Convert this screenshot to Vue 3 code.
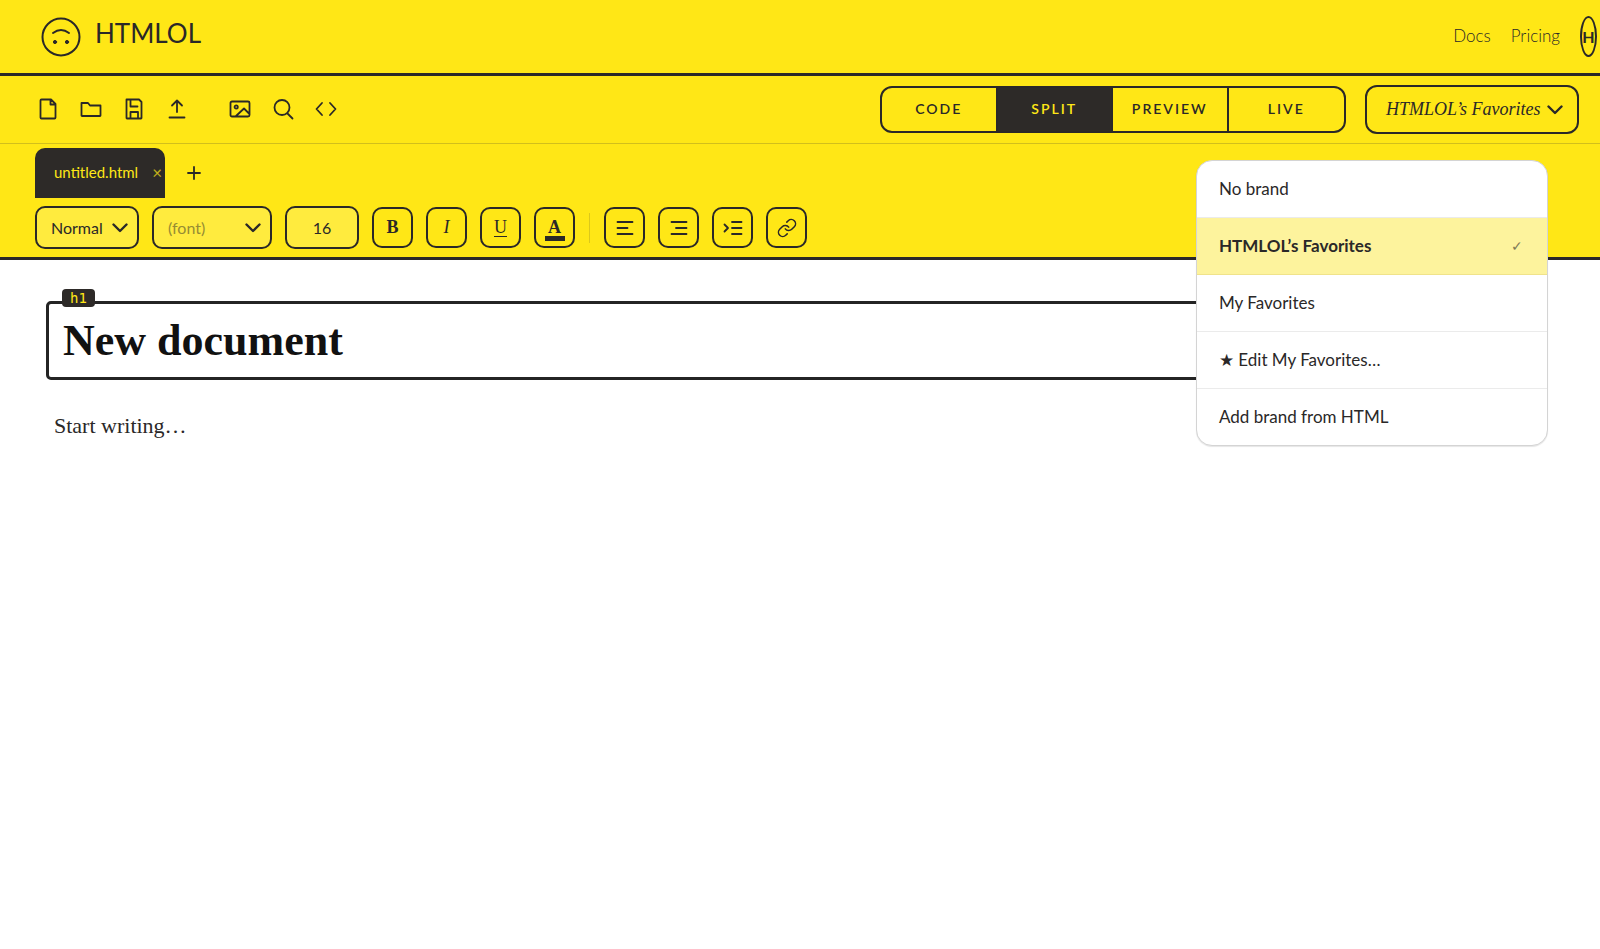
<template>
  <div class="app">
    <header class="topbar">
      <a class="logo" href="#">
        <svg class="logo-face" viewBox="0 0 40 40" aria-hidden="true">
          <circle cx="20" cy="20" r="18.5" />
          <path d="M12 16Q20 10 28 16" />
          <circle class="eye" cx="14" cy="25" r="1.6" />
          <circle class="eye" cx="26" cy="25" r="1.6" />
        </svg>
        <span class="logo-name">HTMLOL</span>
      </a>
      <nav class="top-links">
        <a href="#docs">Docs</a>
        <a href="#pricing">Pricing</a>
        <button class="avatar" type="button" aria-label="Account">H</button>
      </nav>
    </header>

    <!-- File actions, view modes and brand picker -->
    <div class="toolbar">
      <div class="icons">
        <button
          v-for="tool in tools"
          :key="tool.label"
          class="icon-btn"
          :class="{ spaced: tool.spaced }"
          type="button"
          :aria-label="tool.label"
        >
          <svg viewBox="0 0 24 24" aria-hidden="true"><path :d="tool.path" /></svg>
        </button>
      </div>

      <div class="right-tools">
        <div class="modes">
          <button
            v-for="m in modes"
            :key="m"
            type="button"
            :class="{ active: mode === m }"
            @click="mode = m"
          >
            {{ m }}
          </button>
        </div>

        <div class="brand">
          <button class="brand-btn" type="button" @click="menuOpen = !menuOpen">
            <span>{{ brand }}</span>
            <svg class="chevron" viewBox="0 0 16 10" aria-hidden="true"><path d="M1.5 1.5L8 8l6.5-6.5" /></svg>
          </button>
          <div v-if="menuOpen" class="brand-menu">
            <button
              v-for="item in brands"
              :key="item"
              type="button"
              :class="{ selected: item === brand }"
              @click="brand = item"
            >
              <span>{{ item }}</span>
              <span v-if="item === brand" class="check">✓</span>
            </button>
          </div>
        </div>
      </div>
    </div>

    <div class="tabs">
      <div class="tab">
        <span>untitled.html</span>
        <button class="tab-close" type="button" aria-label="Close tab">×</button>
      </div>
      <button class="tab-add" type="button" aria-label="New tab">
        <svg viewBox="0 0 14 14" aria-hidden="true"><path d="M7 1v12M1 7h12" /></svg>
      </button>
    </div>

    <!-- Text formatting -->
    <div class="format">
      <label class="pick pick-style">
        <select v-model="style" aria-label="Style">
          <option>Normal</option>
          <option>Heading 1</option>
        </select>
        <svg class="chevron" viewBox="0 0 16 10" aria-hidden="true"><path d="M1.5 1.5L8 8l6.5-6.5" /></svg>
      </label>
      <label class="pick pick-font">
        <select v-model="font" aria-label="Font">
          <option>(font)</option>
          <option>Serif</option>
        </select>
        <svg class="chevron" viewBox="0 0 16 10" aria-hidden="true"><path d="M1.5 1.5L8 8l6.5-6.5" /></svg>
      </label>
      <input v-model="size" class="size" type="text" aria-label="Font size" />
      <button class="fmt bold" type="button" aria-label="Bold">B</button>
      <button class="fmt italic" type="button" aria-label="Italic">I</button>
      <button class="fmt underline" type="button" aria-label="Underline"><span>U</span></button>
      <button class="fmt color" type="button" aria-label="Text color"><span>A</span></button>
      <span class="divider"></span>
      <button v-for="f in formats" :key="f.label" class="fmt" type="button" :aria-label="f.label">
        <svg :viewBox="f.box" aria-hidden="true"><path :d="f.path" /></svg>
      </button>
    </div>

    <main class="editor">
      <div class="block">
        <span class="block-tag">h1</span>
        <h1>New document</h1>
      </div>
      <p>Start writing…</p>
    </main>
  </div>
</template>

<script setup>
import { ref } from 'vue'

const mode = ref('SPLIT')
const menuOpen = ref(true)
const brand = ref('HTMLOL’s Favorites')
const style = ref('Normal')
const font = ref('(font)')
const size = ref('16')

const modes = ['CODE', 'SPLIT', 'PREVIEW', 'LIVE']

const brands = [
  'No brand',
  'HTMLOL’s Favorites',
  'My Favorites',
  '★ Edit My Favorites…',
  'Add brand from HTML'
]

const tools = [
  {
    label: 'New file',
    path: 'M15 2.5H5.5a1 1 0 0 0-1 1v17a1 1 0 0 0 1 1h13a1 1 0 0 0 1-1V7zM14.5 3v4.5H19'
  },
  { label: 'Open', path: 'M2.5 6h6.500l2 2.500h10.500V18.500a.5.5 0 0 1-.5.5h-18a.5.5 0 0 1-.5-.5z' },
  {
    label: 'Save',
    path: 'M4.5 2.500h12.500l2.500 2.500v16a.5.5 0 0 1-.5.5h-14a.5.5 0 0 1-.5-.5zM8.500 3v6.500h7M8.500 21v-6h7.500v6'
  },
  { label: 'Upload', path: 'M12 15V3.5M7 8.500l5-5 5 5M4.5 20.500h15' },
  {
    label: 'Image',
    spaced: true,
    path: 'M4 4.500h16a1.500 1.500 0 0 1 1.500 1.500v12a1.500 1.500 0 0 1-1.500 1.500h-16a1.500 1.500 0 0 1-1.500-1.500v-12a1.500 1.500 0 0 1 1.500-1.500zM9.800 10a1.600 1.600 0 1 1-3.200 0a1.600 1.600 0 1 1 3.200 0M8 19l8-7.500 5.500 5.500'
  },
  { label: 'Search', path: 'M18.500 10.500a7.500 7.500 0 1 1-15 0a7.500 7.500 0 1 1 15 0M16.500 16.500l5 5' },
  { label: 'Source', path: 'M8 6l-5.500 6 5.500 6M16 6l5.500 6-5.500 6' }
]

const formats = [
  { label: 'Align left', box: '0 0 24 24', path: 'M4.5 6h15M4.5 12h10M4.5 18h15' },
  { label: 'Align right', box: '0 0 24 24', path: 'M4.5 6h15M9 12h10.500M4.5 18h15' },
  { label: 'Indent', box: '0 0 24 24', path: 'M11 6h9.500M11 12h9.500M11 18h9.500M3.500 8.500l3.500 3.500-3.500 3.500' },
  {
    label: 'Link',
    box: '-2 -2 28 28',
    path: 'M10 13a5 5 0 0 0 7.540.540l3-3a5 5 0 0 0-7.070-7.070l-1.720 1.710M14 11a5 5 0 0 0-7.540-.540l-3 3a5 5 0 0 0 7.070 7.070l1.710-1.710'
  }
]
</script>

<style>
body {
  background: #fff;
}
</style>

<style scoped>
* {
  box-sizing: border-box;
}

.app {
  font-family: Lato, sans-serif;
  font-size: 16px;
  color: #2a2828;
}

button,
select,
input {
  font: inherit;
  color: inherit;
  background: none;
  border: none;
  margin: 0;
  padding: 0;
}

button {
  cursor: pointer;
}

svg {
  display: block;
  fill: none;
  stroke: currentColor;
  stroke-width: 1.8;
  stroke-linecap: round;
  stroke-linejoin: round;
}

.topbar {
  display: flex;
  justify-content: space-between;
  align-items: center;
  height: 76px;
  padding: 0 3px 0 41px;
  background: #ffe716;
  border-bottom: 3px solid #2a2828;
}

.logo {
  display: flex;
  align-items: center;
  gap: 14px;
  color: inherit;
  text-decoration: none;
}

.logo-face {
  width: 40px;
  height: 40px;
  stroke-width: 2;
}

.logo-face .eye {
  fill: currentColor;
  stroke-width: 1;
}

.logo-name {
  padding-bottom: 8px;
  font-size: 26px;
}

.top-links {
  display: flex;
  align-items: center;
  gap: 20px;
}

.top-links a {
  padding-bottom: 2px;
  font-size: 17px;
  font-weight: 300;
  color: inherit;
  text-decoration: none;
}

.avatar {
  display: flex;
  align-items: center;
  justify-content: center;
  width: 17px;
  height: 41px;
  border: 2px solid #2a2828;
  border-radius: 50%;
  font-weight: 700;
}

.toolbar {
  display: flex;
  justify-content: space-between;
  align-items: center;
  height: 68px;
  padding: 0 21px 0 36px;
  background: #ffe716;
  border-bottom: 1px solid #d2bf1c;
}

.icons {
  display: flex;
  gap: 19px;
  padding-bottom: 2px;
}

.icon-btn svg {
  width: 24px;
  height: 24px;
}

.spaced {
  margin-left: 20px;
}

.right-tools {
  display: flex;
  align-items: center;
  gap: 19px;
}

.modes {
  display: grid;
  grid-template-columns: repeat(4, 1fr);
  width: 466px;
  height: 47px;
  border: 2px solid #2a2828;
  border-radius: 12px;
  overflow: hidden;
}

.modes button {
  padding-bottom: 2px;
  border-right: 2px solid #2a2828;
  font-size: 14px;
  font-weight: 600;
  letter-spacing: 2px;
}

.modes button:last-child {
  border-right: none;
}

.modes .active {
  background: #2d2a28;
  color: #ffe716;
}

.brand {
  position: relative;
}

.brand-btn {
  display: flex;
  align-items: center;
  justify-content: space-between;
  width: 214px;
  height: 49px;
  padding: 0 14px 0 19px;
  border: 2px solid #2a2828;
  border-radius: 12px;
  font-family: 'Liberation Serif', serif;
  font-size: 18px;
  font-style: italic;
}

.chevron {
  width: 16px;
  height: 10px;
  stroke-width: 2.4;
}

.brand-menu {
  position: absolute;
  top: 75px;
  right: 31px;
  z-index: 10;
  width: 352px;
  background: #fff;
  border: 1px solid #d4d4d4;
  border-radius: 16px;
  overflow: hidden;
  box-shadow: 0 1px 1px rgba(0, 0, 0, 0.1);
}

.brand-menu button {
  display: flex;
  align-items: center;
  justify-content: space-between;
  width: 100%;
  height: 57px;
  padding: 0 24px 2px 22px;
  border-bottom: 1px solid #ebebeb;
  font-size: 17px;
  text-align: left;
}

.brand-menu button:last-child {
  height: 56px;
  border-bottom: none;
}

.brand-menu .selected {
  background: #fdf39d;
  border-bottom-color: #f0e38a;
  font-weight: 700;
}

.check {
  font-size: 14px;
  font-weight: 400;
  opacity: 0.6;
}

.tabs {
  display: flex;
  align-items: center;
  gap: 22px;
  padding: 4px 35px 0;
  background: #ffe716;
}

.tab {
  display: flex;
  align-items: center;
  justify-content: space-between;
  width: 130px;
  height: 50px;
  padding: 0 3px 2px 19px;
  background: #2d2a28;
  border-radius: 10px 10px 0 0;
  color: #ffe716;
  font-size: 15px;
}

.tab-close {
  font-size: 17px;
  opacity: 0.7;
}

.tab-add svg {
  width: 14px;
  height: 14px;
}

.format {
  display: flex;
  align-items: center;
  gap: 13px;
  padding: 8px 35px;
  background: #ffe716;
  border-bottom: 3px solid #2a2828;
}

.pick {
  position: relative;
}

.pick select {
  width: 100%;
  height: 43px;
  padding: 0 14px;
  appearance: none;
  background: #ffeb3e;
  border: 2px solid #2a2828;
  border-radius: 10px;
}

.pick .chevron {
  position: absolute;
  top: 17px;
  right: 11px;
  pointer-events: none;
}

.pick-style {
  width: 104px;
}

.pick-font {
  width: 120px;
}

.pick-font select {
  color: #968b34;
}

.size {
  width: 74px;
  height: 43px;
  background: #ffeb3e;
  border: 2px solid #2a2828;
  border-radius: 10px;
  text-align: center;
}

.fmt {
  display: flex;
  align-items: center;
  justify-content: center;
  width: 41px;
  height: 41px;
  border: 2px solid #2a2828;
  border-radius: 10px;
  font-family: 'Liberation Serif', serif;
  font-size: 18px;
}

.fmt svg {
  width: 24px;
  height: 24px;
}

.bold {
  font-weight: 700;
}

.italic {
  font-style: italic;
}

.underline span {
  line-height: 17px;
  border-bottom: 1px solid #2a2828;
}

.color span {
  width: 20px;
  line-height: 17px;
  margin-top: 4px;
  border-bottom: 5px solid #2a2828;
  font-weight: 700;
}

.divider {
  width: 1px;
  height: 30px;
  margin: 0 1px;
  background: #dcc81a;
}

.editor {
  padding: 41px 56px 40px 46px;
  font-family: 'Liberation Serif', serif;
}

.block {
  position: relative;
  padding: 12px 14px;
  border: 3px solid #242424;
  border-radius: 5px;
}

.block-tag {
  position: absolute;
  top: -15px;
  left: 13px;
  padding: 0 8px;
  background: #2d2a28;
  border-radius: 4px;
  color: #ffe716;
  font-family: 'DejaVu Sans Mono', monospace;
  font-size: 14px;
  line-height: 18px;
}

h1 {
  margin: 0;
  color: #111;
  font-size: 44px;
  line-height: 49px;
}

.editor p {
  margin: 31px 8px 0;
  font-size: 22px;
  line-height: 30px;
}
</style>
